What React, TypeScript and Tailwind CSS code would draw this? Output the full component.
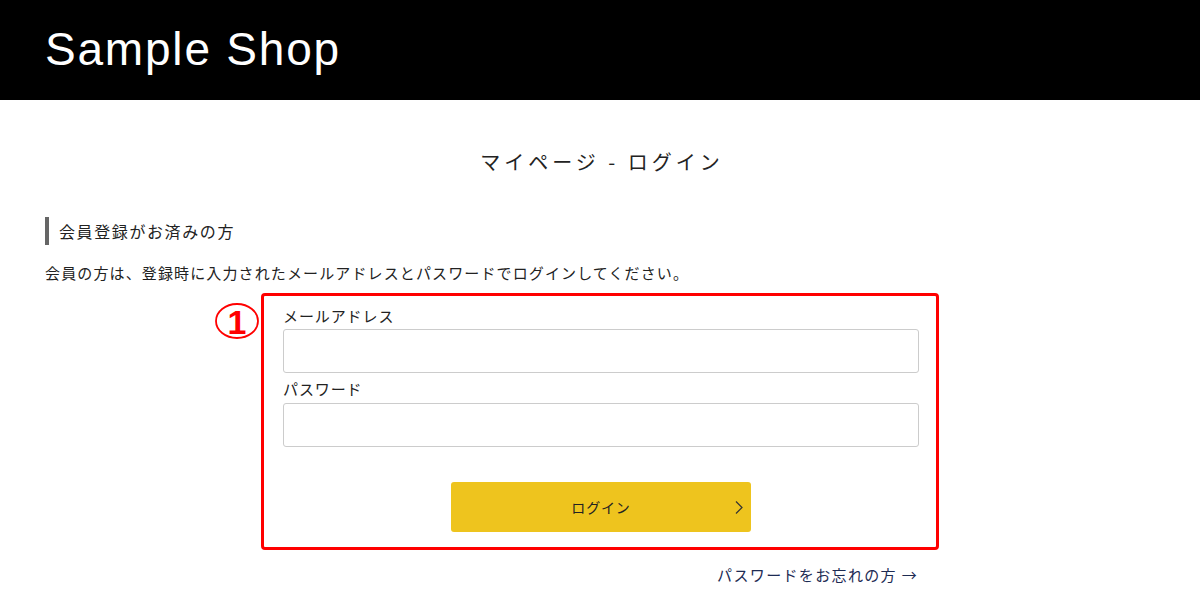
import { useState } from 'react';

const jp = { fontFamily: '"Noto Sans CJK JP", "Noto Sans", sans-serif' };

const App: React.FC = () => {
  const [email, setEmail] = useState('');
  const [password, setPassword] = useState('');

  return (
    <div className="min-h-[600px] bg-white text-[#222]" style={jp}>
      <header className="h-[100px] bg-black flex items-center pl-[45px]">
        <h1
          className="text-white text-[46px] tracking-[1.8px] leading-none pb-[2px]"
          style={{ fontFamily: '"Liberation Sans", Arial, sans-serif' }}
        >
          Sample Shop
        </h1>
      </header>

      <main className="px-[45px] pt-[50px]">
        <h2 className="text-center text-[20px] leading-[24px] tracking-[0.2em] pl-[4px]">
          マイページ - ログイン
        </h2>

        <div className="mt-[43px] h-[28px] border-l-4 border-[#666] pl-[10px] flex items-center">
          <span className="text-[16px] tracking-[0.1em]">会員登録がお済みの方</span>
        </div>

        <p className="mt-[16px] text-[15px] leading-[24px] tracking-[0.075em]">
          会員の方は、登録時に入力されたメールアドレスとパスワードでログインしてください。
        </p>

        <form
          onSubmit={e => e.preventDefault()}
          className="relative mt-[8px] mx-auto w-[678px] border-[3px] border-[#ff0000] rounded-[4px] pl-[19px] pr-[17px] pt-[9px] pb-[15px]"
        >
          {/* circled number marker */}
          <svg
            className="absolute left-[-50px] top-[6px] overflow-visible"
            width="46"
            height="38"
            viewBox="0 0 46 38"
          >
            <ellipse cx="23" cy="19" rx="21" ry="17" fill="none" stroke="#ff0000" strokeWidth="1.8" />
            <text
              x="23"
              y="32"
              textAnchor="middle"
              fontSize="34"
              fontWeight="bold"
              fill="#ff0000"
              fontFamily="Liberation Sans, Arial, sans-serif"
            >
              1
            </text>
          </svg>

          <label htmlFor="email" className="block text-[15px] leading-[22px] tracking-[0.06em]">
            メールアドレス
          </label>
          <input
            id="email"
            type="email"
            value={email}
            onChange={e => setEmail(e.target.value)}
            className="mt-[2px] block w-full h-[44px] border border-[#ccc] rounded-[3px] px-3 outline-none"
          />

          <label htmlFor="password" className="mt-[5px] block text-[15px] leading-[22px] tracking-[0.06em]">
            パスワード
          </label>
          <input
            id="password"
            type="password"
            value={password}
            onChange={e => setPassword(e.target.value)}
            className="mt-[3px] block w-full h-[44px] border border-[#ccc] rounded-[3px] px-3 outline-none"
          />

          <button
            type="submit"
            className="relative mt-[35px] mx-auto flex items-center justify-center w-[300px] h-[50px] bg-[#eec41e] rounded-[3px] text-[14px] text-[#222] tracking-[0.06em]"
          >
            ログイン
            <svg
              className="absolute right-[7px] top-[18px]"
              width="10"
              height="15"
              viewBox="0 0 10 15"
            >
              <polyline points="2,1.5 8,7.5 2,13.5" fill="none" stroke="#333" strokeWidth="1.2" />
            </svg>
          </button>
        </form>

        <div className="mt-[14px] mx-auto w-[636px] flex justify-end">
          <a href="#" className="text-[15px] leading-[22px] tracking-[0.09em] text-[#1d2b53]">
            パスワードをお忘れの方 →
          </a>
        </div>
      </main>
    </div>
  );
};

export default App;
